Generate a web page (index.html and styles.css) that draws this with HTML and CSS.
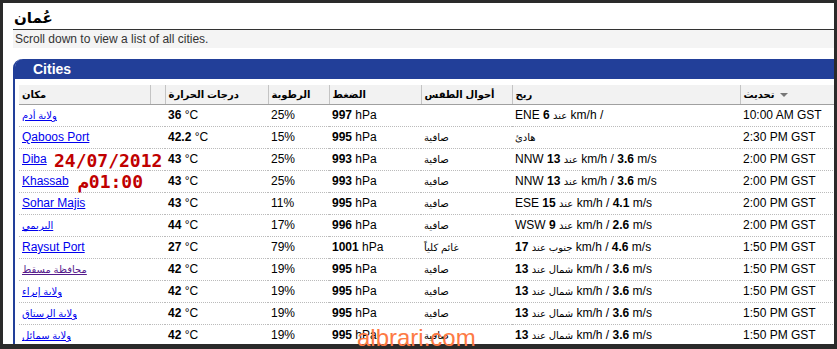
FILE: index.html
```html
<!DOCTYPE html>
<html lang="ar">
<head>
<meta charset="utf-8">
<title>عُمان</title>
<link rel="stylesheet" href="styles.css">
</head>
<body>
<div class="page">
  <h1 class="title">عُمان</h1>
  <div class="note">Scroll down to view a list of all cities.</div>
  <div class="box">
    <div class="box-head">Cities</div>
    <table class="cities">
      <colgroup>
        <col class="c-name"><col class="c-gap"><col class="c-temp"><col class="c-hum"><col class="c-pres"><col class="c-cond"><col class="c-wind"><col class="c-time">
      </colgroup>
      <thead>
        <tr>
          <th>مكان</th><th></th><th>درجات الحرارة</th><th>الرطوبة</th><th>الضغط</th><th>أحوال الطقس</th><th>ريح</th><th>تحديث<span class="sort"></span></th>
        </tr>
      </thead>
      <tbody>
        <tr><td><a href="#" class="ar">ولاية أدم</a></td><td></td><td><b>36</b> °C</td><td>25%</td><td><b>997</b> hPa</td><td></td><td>ENE <b>6</b> <span class="ar">عند</span> km/h /</td><td>10:00 AM GST</td></tr>
        <tr><td><a href="#">Qaboos Port</a></td><td></td><td><b>42.2</b> °C</td><td>15%</td><td><b>995</b> hPa</td><td class="ar">صافية</td><td class="ar">هادئ</td><td>2:30 PM GST</td></tr>
        <tr><td><a href="#">Diba</a></td><td></td><td><b>43</b> °C</td><td>25%</td><td><b>993</b> hPa</td><td class="ar">صافية</td><td>NNW <b>13</b> <span class="ar">عند</span> km/h / <b>3.6</b> m/s</td><td>2:00 PM GST</td></tr>
        <tr><td><a href="#">Khassab</a></td><td></td><td><b>43</b> °C</td><td>25%</td><td><b>993</b> hPa</td><td class="ar">صافية</td><td>NNW <b>13</b> <span class="ar">عند</span> km/h / <b>3.6</b> m/s</td><td>2:00 PM GST</td></tr>
        <tr><td><a href="#">Sohar Majis</a></td><td></td><td><b>43</b> °C</td><td>11%</td><td><b>995</b> hPa</td><td class="ar">صافية</td><td>ESE <b>15</b> <span class="ar">عند</span> km/h / <b>4.1</b> m/s</td><td>2:00 PM GST</td></tr>
        <tr><td><a href="#" class="ar">البريمي</a></td><td></td><td><b>44</b> °C</td><td>17%</td><td><b>996</b> hPa</td><td class="ar">صافية</td><td>WSW <b>9</b> <span class="ar">عند</span> km/h / <b>2.6</b> m/s</td><td>2:00 PM GST</td></tr>
        <tr><td><a href="#">Raysut Port</a></td><td></td><td><b>27</b> °C</td><td>79%</td><td><b>1001</b> hPa</td><td class="ar">غائم كلياً</td><td><b>17</b> <span class="ar">جنوب عند</span> km/h / <b>4.6</b> m/s</td><td>1:50 PM GST</td></tr>
        <tr><td><a href="#" class="ar visited">محافظة مسقط</a></td><td></td><td><b>42</b> °C</td><td>19%</td><td><b>995</b> hPa</td><td class="ar">صافية</td><td><b>13</b> <span class="ar">شمال عند</span> km/h / <b>3.6</b> m/s</td><td>1:50 PM GST</td></tr>
        <tr><td><a href="#" class="ar">ولاية إبراء</a></td><td></td><td><b>42</b> °C</td><td>19%</td><td><b>995</b> hPa</td><td class="ar">صافية</td><td><b>13</b> <span class="ar">شمال عند</span> km/h / <b>3.6</b> m/s</td><td>1:50 PM GST</td></tr>
        <tr><td><a href="#" class="ar">ولاية الرستاق</a></td><td></td><td><b>42</b> °C</td><td>19%</td><td><b>995</b> hPa</td><td class="ar">صافية</td><td><b>13</b> <span class="ar">شمال عند</span> km/h / <b>3.6</b> m/s</td><td>1:50 PM GST</td></tr>
        <tr><td><a href="#" class="ar">ولاية سمائل</a></td><td></td><td><b>42</b> °C</td><td>19%</td><td><b>995</b> hPa</td><td class="ar">صافية</td><td><b>13</b> <span class="ar">شمال عند</span> km/h / <b>3.6</b> m/s</td><td>1:50 PM GST</td></tr>
      </tbody>
    </table>
  </div>
  <div class="stamp stamp-date">24/07/2012</div>
  <div class="stamp stamp-time">م01:00</div>
</div>
<div class="watermark">albrari.com</div>
</body>
</html>
```
FILE: styles.css
```css
html, body {
  margin: 0;
  padding: 0;
}
body {
  background: #2a2a2a;
  width: 837px;
  height: 349px;
  overflow: hidden;
  position: relative;
  font-family: "Liberation Sans", "DejaVu Sans", sans-serif;
  color: #000;
}
.page {
  position: relative;
  margin: 3px 3px 0 3px;
  height: 341px;
  background: #fff;
  overflow: hidden;
  padding-left: 10px;
}
.title {
  margin: 0;
  height: 27px;
  box-sizing: border-box;
  padding: 6px 0 0 1px;
  font-size: 15px;
  line-height: 18px;
  font-weight: bold;
  border-bottom: 1px solid #333;
  width: 900px;
}
.note {
  background: #f4f4f4;
  height: 18px;
  line-height: 18px;
  font-size: 12px;
  color: #333;
  padding-left: 2px;
  width: 900px;
}
.box {
  margin-top: 11px;
  border-left: 2px solid #223f99;
  border-top-left-radius: 9px;
  width: 900px;
}
.box-head {
  background: #223f99;
  height: 20px;
  line-height: 20px;
  color: #fff;
  font-weight: bold;
  font-size: 14px;
  padding-left: 18px;
  border-top-left-radius: 8px;
}
.cities {
  margin: 6px 0 0 4px;
  border-collapse: collapse;
  table-layout: fixed;
  width: 850px;
  font-size: 12px;
}
.c-name { width: 131px; }
.c-gap { width: 15px; }
.c-temp { width: 103px; }
.c-hum { width: 61px; }
.c-pres { width: 92px; }
.c-cond { width: 91px; }
.c-wind { width: 228px; }
.c-time { width: 129px; }
.cities th {
  background: #f2f2f2;
  height: 19px;
  padding: 0 3px;
  text-align: left;
  font-size: 10px;
  font-weight: bold;
  border-bottom: 1px solid #a0a0a0;
  border-left: 1px solid #c4c4c4;
  white-space: nowrap;
  box-sizing: border-box;
}
.cities th:first-child {
  border-left: none;
}
.sort {
  display: inline-block;
  width: 0;
  height: 0;
  margin-left: 5px;
  vertical-align: middle;
  border-left: 4px solid transparent;
  border-right: 4px solid transparent;
  border-top: 4px solid #777;
}
.cities td {
  height: 21px;
  padding: 0 3px;
  border-bottom: 1px dotted #bbb;
  white-space: nowrap;
  overflow: hidden;
}
.cities a {
  color: #00e;
  text-decoration: underline;
}
.cities a.visited {
  color: #551a8b;
}
.ar {
  font-size: 10px;
}
.stamp {
  position: absolute;
  font-family: "DejaVu Sans Mono", "Liberation Mono", monospace;
  font-weight: bold;
  font-size: 18px;
  line-height: 18px;
  color: #c00000;
}
.stamp-date {
  left: 51px;
  top: 149px;
}
.stamp-time {
  left: 75px;
  top: 170px;
  unicode-bidi: bidi-override;
  direction: ltr;
}
.watermark {
  position: absolute;
  left: 357px;
  top: 326px;
  font-size: 24px;
  line-height: 24px;
  color: #fd7a44;
}
```
